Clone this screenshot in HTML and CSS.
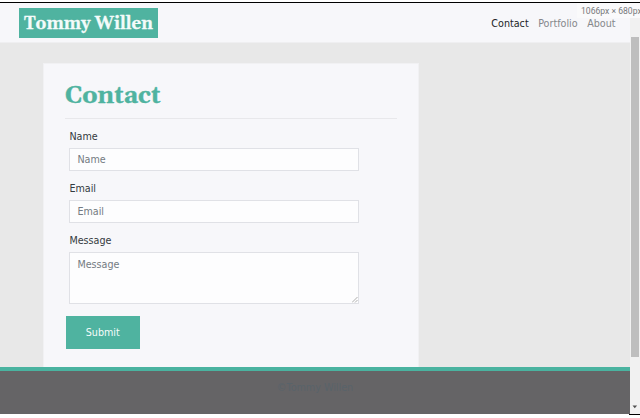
FILE: index.html
```
<!DOCTYPE html>
<html lang="en">
<head>
<meta charset="utf-8">
<title>Tommy Willen | Contact</title>
<link rel="stylesheet" href="styles.css">
</head>
<body>
<div class="window">
  <div class="page">
    <header class="navbar">
      <a class="brand"><svg class="wordmark" viewBox="0 0 139 30"><text x="5" y="20.5" textLength="129" lengthAdjust="spacingAndGlyphs">Tommy Willen</text></svg></a>
      <nav class="links"><a class="active">Contact</a><a>Portfolio</a><a>About</a></nav>
    </header>
    <main class="content">
      <section class="card">
        <h1 class="title"><svg class="heading" viewBox="0 0 110 34"><text x="0" y="22.8" textLength="95.5" lengthAdjust="spacingAndGlyphs">Contact</text></svg></h1>
        <form class="form">
          <label for="name">Name</label>
          <input id="name" type="text" placeholder="Name">
          <label for="email">Email</label>
          <input id="email" type="email" placeholder="Email">
          <label for="message">Message</label>
          <div class="area">
            <textarea id="message" placeholder="Message"></textarea>
            <svg class="grip" viewBox="0 0 6 6"><path d="M0 5.5L5.5 0M3 5.5L5.5 3"/></svg>
          </div>
          <button type="button">Submit</button>
        </form>
      </section>
    </main>
    <footer class="footer">©Tommy Willen</footer>
  </div>
  <div class="scrollbar">
    <div class="thumb"></div>
    <svg class="arrow" viewBox="0 0 6 4"><path d="M.5 .5h4.6L2.8 3.3z"/></svg>
  </div>
  <div class="size">1066px × 680px</div>
</div>
</body>
</html>
```
FILE: styles.css
```
* { box-sizing: border-box; }
body {
  margin: 0;
  height: 418px;
  overflow: hidden;
  background: #fff;
  font: 9.6px/15px "DejaVu Sans", sans-serif;
  color: #343a40;
}
.window {
  position: relative;
  display: flex;
  margin-top: 2px;
  height: 413px;
  border-top: 1px solid #000;
  overflow: hidden;
}
.page {
  width: 630px;
  height: 411px;
  display: flex;
  flex-direction: column;
  background: #e8e8e8;
}
.navbar {
  flex: none;
  height: 40px;
  padding: 0 14.5px 0 19px;
  display: flex;
  justify-content: space-between;
  align-items: flex-start;
  background: #f7f7fa;
  border-bottom: 1px solid #efeff1;
}
.brand {
  margin-top: 5px;
  width: 139px;
  height: 30px;
  background: #4fb3a0;
}
.wordmark, .heading { display: block; overflow: visible; }
.wordmark { width: 139px; height: 30px; }
.wordmark text {
  font: bold 17px Gelasio, Georgia, "Liberation Serif", serif;
  fill: #f4fbfa;
  stroke: #f4fbfa;
  stroke-width: .3;
}
.heading { width: 110px; height: 34px; }
.heading text {
  font: bold 24px Gelasio, Georgia, "Liberation Serif", serif;
  fill: #4fb3a0;
  stroke: #4fb3a0;
  stroke-width: .4;
}
.links {
  display: flex;
  gap: 9.5px;
  padding-top: 13px;
  color: #85878a;
}
.links .active { color: #222427; }
.content {
  flex: 1;
  min-height: 0;
  padding: 20px 0 0 43px;
}
.card {
  width: 376px;
  height: 100%;
  padding: 16px 21px 0;
  background: #f7f7fa;
  border: 1px solid #f1f1f3;
  border-bottom: 0;
}
.title {
  margin: 0;
  height: 39px;
  border-bottom: 1px solid #e8e8eb;
}
.form {
  display: flex;
  flex-direction: column;
  width: 294px;
  padding: 10px 0 0 4.4px;
}
label { height: 15px; margin-bottom: 4px; }
input, textarea {
  display: block;
  width: 289.5px;
  margin: 0;
  padding: 0 7px;
  border: 1px solid #e0e1e6;
  border-radius: 0;
  background: #fdfdfe;
  font: inherit;
  outline: 0;
}
input { height: 23px; margin-bottom: 10px; }
::placeholder { color: #747b82; opacity: 1; }
.area { position: relative; width: 289.5px; height: 52px; }
textarea { height: 52px; padding-top: 4px; resize: none; overflow: hidden; }
.grip {
  position: absolute;
  right: 1px;
  bottom: 1px;
  width: 6px;
  height: 6px;
  fill: none;
  stroke: #999;
  stroke-width: .8;
}
button {
  width: 73.5px;
  height: 33px;
  margin: 12px 0 0 -3.4px;
  padding: 0;
  border: 0;
  background: #4fb3a0;
  color: #f6fcfb;
  font: inherit;
}
.footer {
  flex: none;
  height: 47px;
  padding-top: 9px;
  border-top: 4px solid #4ab3a0;
  background: #656466;
  color: #59636a;
  text-align: center;
}
.scrollbar {
  width: 10px;
  height: 411px;
  padding: 34px 1px 5px;
  display: flex;
  flex-direction: column;
  justify-content: space-between;
  background: #f1f1f1;
}
.thumb { height: 320px; background: #bebebe; }
.arrow { width: 6px; height: 4px; margin-left: 1px; fill: #505050; }
.window::after {
  content: "";
  position: absolute;
  right: 0;
  bottom: 0;
  width: 11px;
  height: 1px;
  background: #000;
}
.size {
  position: absolute;
  top: 0;
  left: 577px;
  width: 63px;
  height: 15px;
  padding-left: 4px;
  overflow: hidden;
  white-space: nowrap;
  background: #fafafb;
  color: #77797c;
  font: 8.6px/16px Roboto, sans-serif;
}
```
